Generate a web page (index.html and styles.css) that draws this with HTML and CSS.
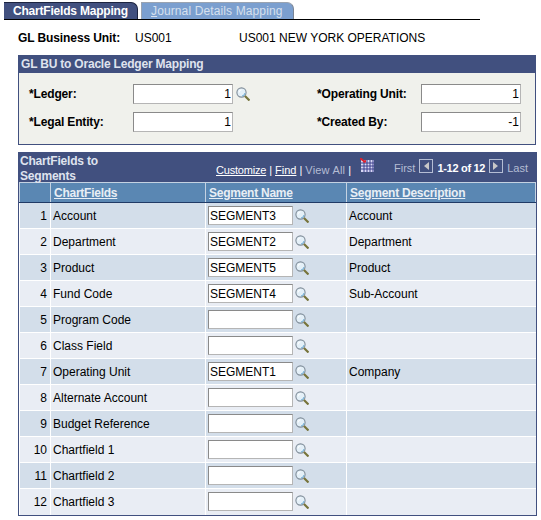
FILE: index.html
```html
<!DOCTYPE html>
<html lang="en">
  <head>
    <meta charset="UTF-8" />
    <meta name="viewport" content="width=device-width, initial-scale=1.0" />
    <title>ChartFields Mapping</title>
    <link rel="stylesheet" href="styles.css">
  </head>
  <body>
    <svg class="icon-defs" width="0" height="0">
      <defs>
        <symbol id="lookup" viewBox="0 0 14 14">
          <circle cx="5.5" cy="5.5" r="4.6" fill="#e4f0f8" stroke="#7f8c98" stroke-width="1.1" />
          <path d="M3 5.5a2.6 2.6 0 0 1 2.5-2.6" fill="none" stroke="#ffffff" stroke-width="1" />
          <path d="M6 9a3.6 3.6 0 0 0 3-3" fill="none" stroke="#6fb0d8" stroke-width="1" />
          <path d="M9 9l4.5 4.5" fill="none" stroke="#77743a" stroke-width="2.2" />
        </symbol>
      </defs>
    </svg>

    <div class="tabs">
      <div class="tab tab-active">ChartFields Mapping</div>
      <div class="tab tab-other"><u>J</u>ournal Details Mapping</div>
    </div>

    <div class="bu-row">
      <span class="bu-label">GL Business Unit:</span>
      <span class="bu-code">US001</span>
      <span>US001 NEW YORK OPERATIONS</span>
    </div>

    <div class="group">
      <div class="group-head">GL BU to Oracle Ledger Mapping</div>
      <div class="group-body">
        <label class="lbl">*Ledger:</label>
        <div class="field"><input class="num" type="text" value="1" /><svg class="lookup lookup-wide"><use href="#lookup" /></svg></div>
        <label class="lbl">*Operating Unit:</label>
        <div class="field"><input class="num" type="text" value="1" /></div>
        <label class="lbl">*Legal Entity:</label>
        <div class="field"><input class="num" type="text" value="1" /></div>
        <label class="lbl">*Created By:</label>
        <div class="field"><input class="num" type="text" value="-1" /></div>
      </div>
    </div>

    <div class="grid-box">
      <div class="grid-nav">
        <div class="grid-title">ChartFields to Segments</div>
        <div class="nav-links">
          <a class="link-tight" href="#">Customize</a><span class="sep">|</span><a href="#">Find</a><span class="sep">|</span><span class="dim view-all">View All</span><span class="sep">|</span>
          <svg class="grid-icon" width="14" height="14" viewBox="0 0 14 14">
            <rect x="1" y="2" width="13" height="12" fill="#d8d8f4" />
            <path d="M1 5h13M1 8h13M1 11h13M4 2v12M7 2v12M10 2v12M13 2v12" stroke="#3a3f8c" stroke-width="1" />
            <path d="M0 0l5 4" stroke="#e0202c" stroke-width="1.8" />
            <path d="M3 4.5h3v-3z" fill="#e0202c" />
          </svg>
        </div>
        <div class="pager">
          <span class="dim">First</span>
          <span class="page-btn"><i class="arrow-left"></i></span>
          <b>1-12 of 12</b>
          <span class="page-btn"><i class="arrow-right"></i></span>
          <span class="dim">Last</span>
        </div>
      </div>
      <table class="grid">
        <thead>
          <tr>
            <th class="col-num"></th>
            <th class="col-name"><a href="#">ChartFields</a></th>
            <th class="col-seg"><a href="#">Segment Name</a></th>
            <th class="col-desc"><a href="#">Segment Description</a></th>
          </tr>
        </thead>
        <tbody id="rows"></tbody>
      </table>
    </div>

    <script>
      const rows = [
        ["Account", "SEGMENT3", "Account"],
        ["Department", "SEGMENT2", "Department"],
        ["Product", "SEGMENT5", "Product"],
        ["Fund Code", "SEGMENT4", "Sub-Account"],
        ["Program Code", "", ""],
        ["Class Field", "", ""],
        ["Operating Unit", "SEGMENT1", "Company"],
        ["Alternate Account", "", ""],
        ["Budget Reference", "", ""],
        ["Chartfield 1", "", ""],
        ["Chartfield 2", "", ""],
        ["Chartfield 3", "", ""],
      ];
      const rowsEl = document.getElementById("rows");
      rows.forEach(function (row, i) {
        const tr = document.createElement("tr");
        tr.innerHTML =
          '<td class="cell-num">' + (i + 1) + "</td>" +
          "<td>" + row[0] + "</td>" +
          '<td><div class="field"><input class="seg" type="text" value="' + row[1] + '" />' +
          '<svg class="lookup"><use href="#lookup" /></svg></div></td>' +
          "<td>" + row[2] + "</td>";
        rowsEl.appendChild(tr);
      });
    </script>
  </body>
</html>
```

FILE: styles.css
```css
body {
  margin: 0;
  background: #fff;
  color: #000;
  font-family: "Liberation Sans", Arial, sans-serif;
  font-size: 12px;
}

.icon-defs {
  display: block;
  height: 0;
}

/* tabs */
.tabs {
  display: flex;
  width: 476px;
  height: 17px;
  margin: 2px 0 0 4px;
  border-bottom: 1px solid #000;
}
.tab {
  height: 17px;
  box-sizing: border-box;
  padding-top: 1px;
  border-radius: 0 7px 0 0;
  line-height: 15px;
  font-size: 12px;
}
.tab-active {
  width: 134px;
  padding-left: 9px;
  background: #41507f;
  border-top: 1px solid #1c2440;
  border-right: 1px solid #1c2440;
  color: #fff;
  font-weight: bold;
  letter-spacing: -0.2px;
}
.tab-other {
  width: 153px;
  margin-left: 3px;
  padding-left: 9px;
  background: #7b9fcf;
  border-top: 1px solid #9aa3b0;
  border-right: 1px solid #7a8494;
  border-left: 1px solid #9aa3b0;
  color: #d6e0ee;
  letter-spacing: 0.12px;
}

/* business unit line */
.bu-row {
  display: flex;
  margin: 11px 0 0 18px;
  line-height: 15px;
}
.bu-label {
  width: 117px;
  font-weight: bold;
  letter-spacing: -0.1px;
}
.bu-code {
  width: 104px;
}

/* group box */
.group {
  width: 518px;
  height: 90px;
  box-sizing: border-box;
  margin: 9px 0 0 18px;
  border: 1px solid #41507f;
  background: #f0f1ec;
}
.group-head {
  height: 17px;
  padding-left: 2px;
  background: #41507f;
  color: #dfe3ee;
  font-weight: bold;
  line-height: 16px;
  letter-spacing: -0.2px;
}
.group-body {
  display: grid;
  grid-template-columns: 104px 184px 104px 100px;
  grid-auto-rows: 28px;
  align-items: center;
  padding: 7px 0 0 10px;
}
.lbl {
  font-weight: bold;
  letter-spacing: -0.15px;
}
.field {
  display: flex;
  align-items: center;
}
input {
  box-sizing: border-box;
  height: 20px;
  padding: 0 1px;
  border: 1px solid #b5b5b5;
  border-top-color: #8a8a8a;
  border-left-color: #8a8a8a;
  background: #fff;
  font: 12px "Liberation Sans", Arial, sans-serif;
  color: #000;
}
.num {
  width: 100px;
  text-align: right;
}
.seg {
  width: 85px;
  height: 19px;
}
.lookup {
  width: 14px;
  height: 14px;
  margin-left: 2px;
}
.lookup-wide {
  margin-left: 3px;
}

/* grid */
.grid-box {
  width: 519px;
  box-sizing: border-box;
  margin: 7px 0 0 18px;
  border: 1px solid #41507f;
  border-top: 0;
}
.grid-nav {
  display: flex;
  align-items: flex-start;
  height: 30px;
  background: #41507f;
  color: #dfe3ee;
}
.grid-title {
  width: 197px;
  box-sizing: border-box;
  padding: 2px 100px 0 1px;
  font-weight: bold;
  line-height: 15px;
  letter-spacing: -0.2px;
}
.nav-links {
  display: flex;
  align-items: center;
  width: 178px;
  padding-top: 11px;
  line-height: 15px;
  font-size: 11px;
}
.nav-links a {
  color: #fff;
}
.link-tight {
  letter-spacing: -0.2px;
}
.sep {
  margin: 0 3px;
  color: #fff;
}
.dim {
  color: #b5bdd4;
}
.view-all {
  letter-spacing: 0.2px;
}
.grid-icon {
  margin: -12px 0 0 6px;
}
.pager {
  display: flex;
  align-items: center;
  gap: 4px;
  padding-top: 9px;
  font-size: 11px;
  line-height: 15px;
}
.pager b {
  color: #fff;
  letter-spacing: -0.3px;
}
.page-btn {
  display: block;
  width: 14px;
  height: 14px;
  margin-top: -5px;
  border: 1px solid #b5bdd4;
  box-sizing: border-box;
}
.arrow-left,
.arrow-right {
  display: block;
  width: 0;
  height: 0;
  margin: 2px 0 0 3px;
  border: 4px solid transparent;
}
.arrow-left {
  margin-left: 0;
  border-right: 5px solid #c8c8c8;
}
.arrow-right {
  margin-left: 3px;
  border-left: 5px solid #c8c8c8;
}
.grid {
  width: 517px;
  border-collapse: collapse;
  table-layout: fixed;
}
.grid th {
  height: 20px;
  padding: 0 0 0 3px;
  box-sizing: border-box;
  background: #5a87b3;
  border: 1px solid #c4d2e2;
  border-bottom: 1px solid #1f3a66;
  text-align: left;
  letter-spacing: -0.25px;
}
.grid th a {
  color: #e8eef5;
}
.col-num {
  width: 31px;
}
.col-name {
  width: 155px;
}
.col-seg {
  width: 141px;
}
.grid td {
  height: 26px;
  padding: 0 0 0 2px;
  box-sizing: border-box;
  border-right: 1px solid #fff;
  border-bottom: 1px solid #fff;
  background: #d3deea;
}
.grid tr:nth-child(even) td {
  background: #e9edf4;
}
.grid td:last-child {
  border-right: 0;
}
.grid tr:last-child td {
  border-bottom: 0;
}
.grid .cell-num {
  padding: 0 3px 0 0;
  text-align: right;
}
```
